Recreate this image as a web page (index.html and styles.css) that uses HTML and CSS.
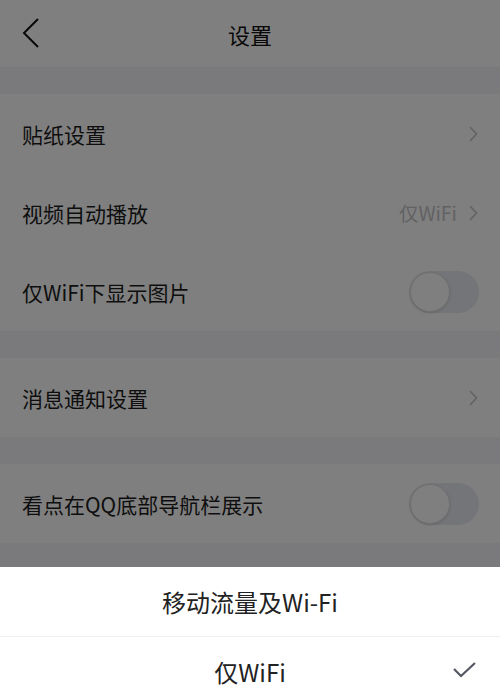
FILE: index.html
```html
<!DOCTYPE html>
<html lang="zh-CN">
<head>
<meta charset="UTF-8">
<meta name="viewport" content="width=device-width, initial-scale=1.0">
<title>设置</title>
<link rel="stylesheet" href="styles.css">
</head>
<body>

<div class="page">
    <div class="navbar">
        <svg class="back" width="20" height="32" viewBox="0 0 20 32">
            <path d="M17 2 L3 16 L17 30" fill="none" stroke="#111" stroke-width="2"/>
        </svg>
        <h1>设置</h1>
    </div>

    <div class="gap"></div>
    <div class="group">
        <div class="row">
            <span class="label">贴纸设置</span>
            <span class="more"><svg class="arrow" width="10" height="16" viewBox="0 0 10 16"><path d="M2 1 L8.5 8 L2 15" fill="none" stroke="#c4c4c8" stroke-width="1.6"/></svg></span>
        </div>
        <div class="row">
            <span class="label">视频自动播放</span>
            <span class="more"><span class="value">仅WiFi</span><svg class="arrow" width="10" height="16" viewBox="0 0 10 16"><path d="M2 1 L8.5 8 L2 15" fill="none" stroke="#c4c4c8" stroke-width="1.6"/></svg></span>
        </div>
        <div class="row">
            <span class="label">仅WiFi下显示图片</span>
            <span class="switch"><span class="knob"></span></span>
        </div>
    </div>

    <div class="gap"></div>
    <div class="group">
        <div class="row">
            <span class="label">消息通知设置</span>
            <span class="more"><svg class="arrow" width="10" height="16" viewBox="0 0 10 16"><path d="M2 1 L8.5 8 L2 15" fill="none" stroke="#c4c4c8" stroke-width="1.6"/></svg></span>
        </div>
    </div>

    <div class="gap"></div>
    <div class="group">
        <div class="row">
            <span class="label">看点在QQ底部导航栏展示</span>
            <span class="switch"><span class="knob"></span></span>
        </div>
    </div>
    <div class="gap tall"></div>
</div>

<div class="mask"></div>

<div class="sheet">
    <div class="option">移动流量及Wi-Fi</div>
    <div class="option selected">
        仅WiFi
        <svg class="check" width="26" height="20" viewBox="0 0 26 20">
            <path d="M2 9 L9 16 L23 3" fill="none" stroke="#555863" stroke-width="2.2"/>
        </svg>
    </div>
</div>

</body>
</html>
```

FILE: styles.css
```css
body {
    margin: 0;
    padding: 0;
    font-family: "Noto Sans CJK SC", "Noto Sans", sans-serif;
    background-color: #fff;
    color: #222;
    overflow: hidden;
}
.page {
    width: 500px;
}
.navbar {
    height: 67px;
    display: flex;
    align-items: center;
    justify-content: center;
    position: relative;
    background-color: #fff;
}
.navbar h1 {
    margin: 0;
    font-size: 22px;
    font-weight: normal;
    color: #111;
}
.back {
    position: absolute;
    left: 21px;
    top: 17px;
}
.gap {
    height: 27px;
    background-color: #f4f5f9;
}
.gap.tall {
    height: 60px;
}
.group {
    background-color: #fff;
}
.row {
    height: 79px;
    display: flex;
    align-items: center;
    justify-content: space-between;
    padding: 0 22px 0 22px;
}
.label {
    font-size: 21px;
    color: #1c1c1c;
}
.more {
    display: flex;
    align-items: center;
    gap: 11px;
}
.value {
    font-size: 19.5px;
    color: #c4c4c8;
}
.arrow {
    display: block;
}
.switch {
    width: 70px;
    height: 42px;
    border-radius: 21px;
    background-color: #e9eaf0;
    position: relative;
    margin-right: -1px;
}
.knob {
    position: absolute;
    left: 1px;
    top: 1px;
    width: 38px;
    height: 38px;
    border-radius: 50%;
    background-color: #fff;
    border: 1px solid #e0e0e4;
    box-shadow: 0 1px 3px rgba(0, 0, 0, 0.12);
}
.mask {
    position: fixed;
    left: 0;
    top: 0;
    right: 0;
    bottom: 0;
    background-color: rgba(0, 0, 0, 0.5);
}
.sheet {
    position: fixed;
    left: 0;
    right: 0;
    top: 567px;
    background-color: #fff;
}
.option {
    height: 69px;
    display: flex;
    align-items: center;
    justify-content: center;
    font-size: 24px;
    color: #222;
    position: relative;
}
.option + .option {
    border-top: 1px solid #f0f0f2;
}
.check {
    position: absolute;
    right: 22px;
    top: 23px;
}
```
